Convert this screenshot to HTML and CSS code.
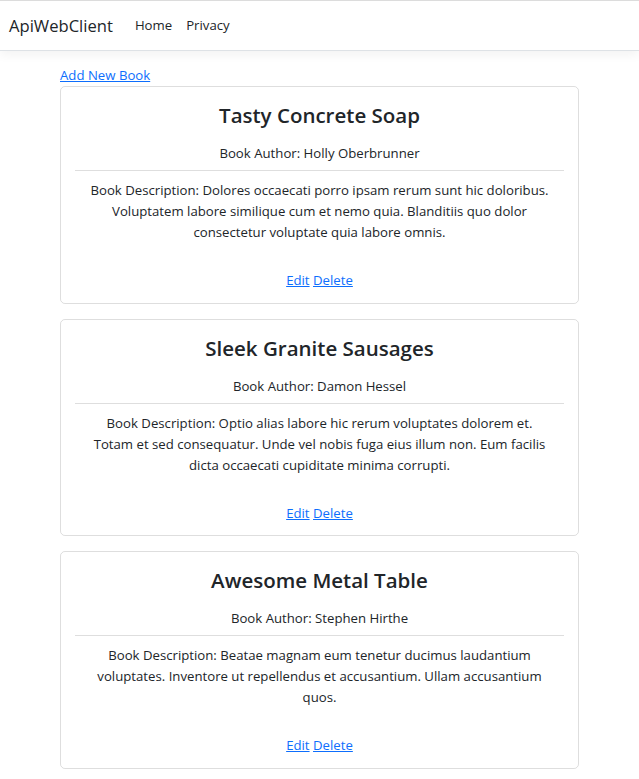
FILE: index.html
```html
<!DOCTYPE html>
<html lang="en">
<head>
<meta charset="utf-8">
<title>ApiWebClient</title>
<link rel="stylesheet" href="styles.css">
</head>
<body>
<header class="navbar">
  <a class="brand" href="#">ApiWebClient</a>
  <nav class="nav">
    <a class="nav-link" href="#">Home</a>
    <a class="nav-link" href="#">Privacy</a>
  </nav>
</header>
<main class="container">
  <a class="add-link" href="#">Add New Book</a>
  <div class="cards">
    <div class="card">
      <h3 class="title">Tasty Concrete Soap</h3>
      <p class="author">Book Author: Holly Oberbrunner</p>
      <hr class="divider">
      <p class="desc">Book Description: Dolores occaecati porro ipsam rerum sunt hic doloribus. Voluptatem labore similique cum et nemo quia. Blanditiis quo dolor consectetur voluptate quia labore omnis.</p>
      <div class="actions"><a href="#">Edit</a> <a href="#">Delete</a></div>
    </div>
    <div class="card">
      <h3 class="title">Sleek Granite Sausages</h3>
      <p class="author">Book Author: Damon Hessel</p>
      <hr class="divider">
      <p class="desc">Book Description: Optio alias labore hic rerum voluptates dolorem et. Totam et sed consequatur. Unde vel nobis fuga eius illum non. Eum facilis dicta occaecati cupiditate minima corrupti.</p>
      <div class="actions"><a href="#">Edit</a> <a href="#">Delete</a></div>
    </div>
    <div class="card">
      <h3 class="title">Awesome Metal Table</h3>
      <p class="author">Book Author: Stephen Hirthe</p>
      <hr class="divider">
      <p class="desc">Book Description: Beatae magnam eum tenetur ducimus laudantium voluptates. Inventore ut repellendus et accusantium. Ullam accusantium quos.</p>
      <div class="actions"><a href="#">Edit</a> <a href="#">Delete</a></div>
    </div>
  </div>
</main>
</body>
</html>
```

FILE: styles.css
```css
html, body {
  margin: 0;
  padding: 0;
}
body {
  font-family: "Open Sans", "Noto Sans", sans-serif;
  font-size: 13.2px;
  line-height: 21px;
  color: #212529;
  background: #fff;
}
a {
  color: #0d6efd;
  text-decoration: underline;
}
.navbar {
  display: flex;
  align-items: center;
  height: 49px;
  padding: 0 9px;
  border-top: 1px solid #dcdcdc;
  border-bottom: 1px solid #dee2e6;
  box-shadow: 0 4px 10px rgba(0, 0, 0, 0.05);
  margin-bottom: 14px;
}
.brand {
  font-size: 16.6px;
  color: #212529;
  text-decoration: none;
  margin-right: 15px;
}
.nav {
  display: flex;
}
.nav-link {
  color: #212529;
  text-decoration: none;
  padding: 0 7px;
}
.container {
  width: 519px;
  margin: 0 auto;
  display: flex;
  flex-direction: column;
  align-items: flex-start;
}
.add-link {
  line-height: 21px;
}
.cards {
  align-self: stretch;
  display: flex;
  flex-direction: column;
  gap: 15px;
}
.card {
  border: 1px solid rgba(0, 0, 0, 0.13);
  border-radius: 5px;
  padding: 15px 14px 11.5px;
  text-align: center;
}
.title {
  margin: 0 0 15px;
  font-size: 20.5px;
  font-weight: 600;
  line-height: 26px;
}
.author {
  margin: 0;
}
.divider {
  margin: 6px 0 9px;
  border: 0;
  border-top: 1px solid rgba(0, 0, 0, 0.13);
}
.desc {
  margin: 0 0 27px;
  padding: 0 10.5px;
}
```
